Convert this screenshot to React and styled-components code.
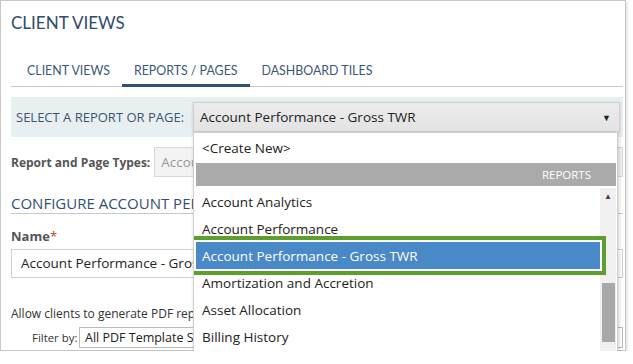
import styled, { createGlobalStyle } from 'styled-components';

const GlobalStyle = createGlobalStyle`
  body {
    margin: 0;
    background: #fff;
    font-family: 'Open Sans', 'Noto Sans', sans-serif;
  }
`;

const Panel = styled.div`
  position: relative;
  width: 612px;
  height: 349px;
  padding: 0 2px 0 10px;
  border: 1px solid #c6c6c6;
  background: #fff;
  box-shadow: 0 2px 4px rgba(0, 0, 0, 0.25);
`;

const Clip = styled.div`
  height: 349px;
  overflow: hidden;
`;

const Title = styled.h1`
  margin: 0;
  padding-top: 12px;
  height: 53px;
  box-sizing: border-box;
  font-family: Lato, sans-serif;
  font-weight: 400;
  font-size: 17px;
  line-height: 20px;
  color: #2f4b6c;
`;

const Tabs = styled.div`
  display: flex;
  padding-left: 4px;
  border-bottom: 1px solid #c8c8c8;
`;

const Tab = styled.div`
  padding: 10px 12px 7px;
  font-family: Lato, sans-serif;
  font-size: 12.4px;
  line-height: 13px;
  color: #3b5878;
  border-bottom: 3px solid ${(p) => (p.$active ? '#30507a' : 'transparent')};
  margin-bottom: -1px;
`;

const SelectBar = styled.div`
  display: flex;
  align-items: center;
  margin-top: 10px;
  height: 40px;
  padding: 0 3px 0 5px;
  background: #e8eff0;
`;

const BarLabel = styled.div`
  width: 177px;
  font-size: 13px;
  color: #3d5470;
  white-space: nowrap;
`;

const SelectBox = styled.div`
  flex: 1;
  display: flex;
  align-items: center;
  justify-content: space-between;
  height: 30px;
  box-sizing: border-box;
  padding: 0 8px 0 6px;
  border: 1px solid #cfcfcf;
  background: linear-gradient(#ececec, #e3e3e3);
  box-shadow: 0 1px 3px rgba(0, 0, 0, 0.15);
  font-size: 13.5px;
  color: #222;
`;

const Caret = styled.span`
  font-size: 9px;
  color: #222;
`;

const FieldRow = styled.div`
  display: flex;
  align-items: center;
  gap: 4px;
  margin-top: 10px;
`;

const BoldLabel = styled.div`
  font-size: 12px;
  font-weight: 700;
  color: #555;
  white-space: nowrap;
`;

const GreyInput = styled.div`
  flex: 1;
  height: 30px;
  box-sizing: border-box;
  padding: 5px 6px;
  border: 1px solid #d8d8d8;
  background: #f3f3f3;
  font-size: 13.5px;
  color: #999;
  white-space: nowrap;
`;

const SectionHead = styled.h2`
  margin: 17px 0 0;
  padding-bottom: 1px;
  border-bottom: 1px solid #c8c8c8;
  font-weight: 400;
  font-size: 15px;
  line-height: 18px;
  color: #344f70;
  white-space: nowrap;
`;

const NameLabel = styled.div`
  margin-top: 13px;
  font-size: 13px;
  font-weight: 700;
  color: #555;

  span {
    color: #c8342c;
    font-weight: 400;
  }
`;

const TextInput = styled.div`
  margin-top: 4px;
  height: 29px;
  box-sizing: border-box;
  padding: 4px 9px;
  border: 1px solid #cfcfcf;
  font-size: 13.5px;
  color: #222;
  white-space: nowrap;
`;

const Note = styled.div`
  margin-top: 27px;
  font-size: 12px;
  color: #333;
  white-space: nowrap;
`;

const FilterRow = styled.div`
  display: flex;
  align-items: center;
  gap: 3px;
  margin-top: 5px;
  padding-left: 21px;
  font-size: 11.4px;
  color: #333;
`;

const FilterLabel = styled.span`
  width: 44px;
  white-space: nowrap;
`;

const SmallSelect = styled.div`
  flex: 1;
  height: 21px;
  box-sizing: border-box;
  padding: 1px 5px;
  border: 1px solid #bbb;
  font-size: 12.5px;
  color: #222;
  white-space: nowrap;
`;

const CutBox = styled.div`
  margin: 3px 0 0 117px;
  height: 20px;
  border: 1px solid #ccc;
`;

const Popup = styled.div`
  position: absolute;
  left: 192px;
  top: 131px;
  width: 423px;
  height: 220px;
  display: flex;
  flex-direction: column;
  background: #fff;
  border: 1px solid #cfcfcf;
  box-shadow: 1px 2px 4px rgba(0, 0, 0, 0.2);
  z-index: 2;
`;

const CreateNew = styled.div`
  height: 30px;
  padding: 0 8px;
  display: flex;
  align-items: center;
  font-size: 13.5px;
  color: #222;
`;

const GroupHead = styled.div`
  margin: 0 1px 0 2px;
  height: 23px;
  display: flex;
  align-items: center;
  justify-content: flex-end;
  padding-right: 25px;
  background: #aaa;
  color: #fff;
  font-size: 11.5px;
`;

const ListArea = styled.div`
  flex: 1;
  display: flex;
  padding: 2px 1px 0 2px;
  overflow: hidden;
`;

const Items = styled.div`
  flex: 1;
`;

const Item = styled.div`
  position: relative;
  height: 27px;
  padding: 0 6px;
  display: flex;
  align-items: center;
  font-size: 13.5px;
  white-space: nowrap;
  color: ${(p) => (p.$selected ? '#fff' : '#222')};
  background: ${(p) => (p.$selected ? '#4a89c8' : 'transparent')};
  box-shadow: ${(p) =>
    p.$selected ? '0 0 0 2px #fff, 0 0 0 6px #5d9f2b' : 'none'};
  z-index: ${(p) => (p.$selected ? 1 : 0)};
`;

const Scrollbar = styled.div`
  width: 16px;
  display: flex;
  flex-direction: column;
  align-items: center;
  background: #f0f0f0;
`;

const ScrollArrow = styled.div`
  height: 15px;
  font-size: 8px;
  line-height: 15px;
  color: #444;
`;

const Thumb = styled.div`
  margin-top: 80px;
  width: 13px;
  height: 59px;
  background: #a8a8a8;
`;

const reports = [
  'Account Analytics',
  'Account Performance',
  'Account Performance - Gross TWR',
  'Amortization and Accretion',
  'Asset Allocation',
  'Billing History',
];

const App = () => (
  <>
    <GlobalStyle />
    <Panel>
      <Clip>
        <Title>CLIENT VIEWS</Title>
        <Tabs>
          <Tab>CLIENT VIEWS</Tab>
          <Tab $active>REPORTS / PAGES</Tab>
          <Tab>DASHBOARD TILES</Tab>
        </Tabs>
        <SelectBar>
          <BarLabel>SELECT A REPORT OR PAGE:</BarLabel>
          <SelectBox>
            Account Performance - Gross TWR
            <Caret>▼</Caret>
          </SelectBox>
        </SelectBar>
        <FieldRow>
          <BoldLabel>Report and Page Types:</BoldLabel>
          <GreyInput>Account Performance</GreyInput>
        </FieldRow>
        <SectionHead>CONFIGURE ACCOUNT PERFORMANCE - GROSS TWR</SectionHead>
        <NameLabel>
          Name<span>*</span>
        </NameLabel>
        <TextInput>Account Performance - Gross TWR</TextInput>
        <Note>Allow clients to generate PDF reports from this page</Note>
        <FilterRow>
          <FilterLabel>Filter by:</FilterLabel>
          <SmallSelect>All PDF Template Sets</SmallSelect>
        </FilterRow>
        <CutBox />
      </Clip>
      <Popup>
        <CreateNew>&lt;Create New&gt;</CreateNew>
        <GroupHead>REPORTS</GroupHead>
        <ListArea>
          <Items>
            {reports.map((r) => (
              <Item key={r} $selected={r === 'Account Performance - Gross TWR'}>
                {r}
              </Item>
            ))}
          </Items>
          <Scrollbar>
            <ScrollArrow>▲</ScrollArrow>
            <Thumb />
          </Scrollbar>
        </ListArea>
      </Popup>
    </Panel>
  </>
);

export default App;
